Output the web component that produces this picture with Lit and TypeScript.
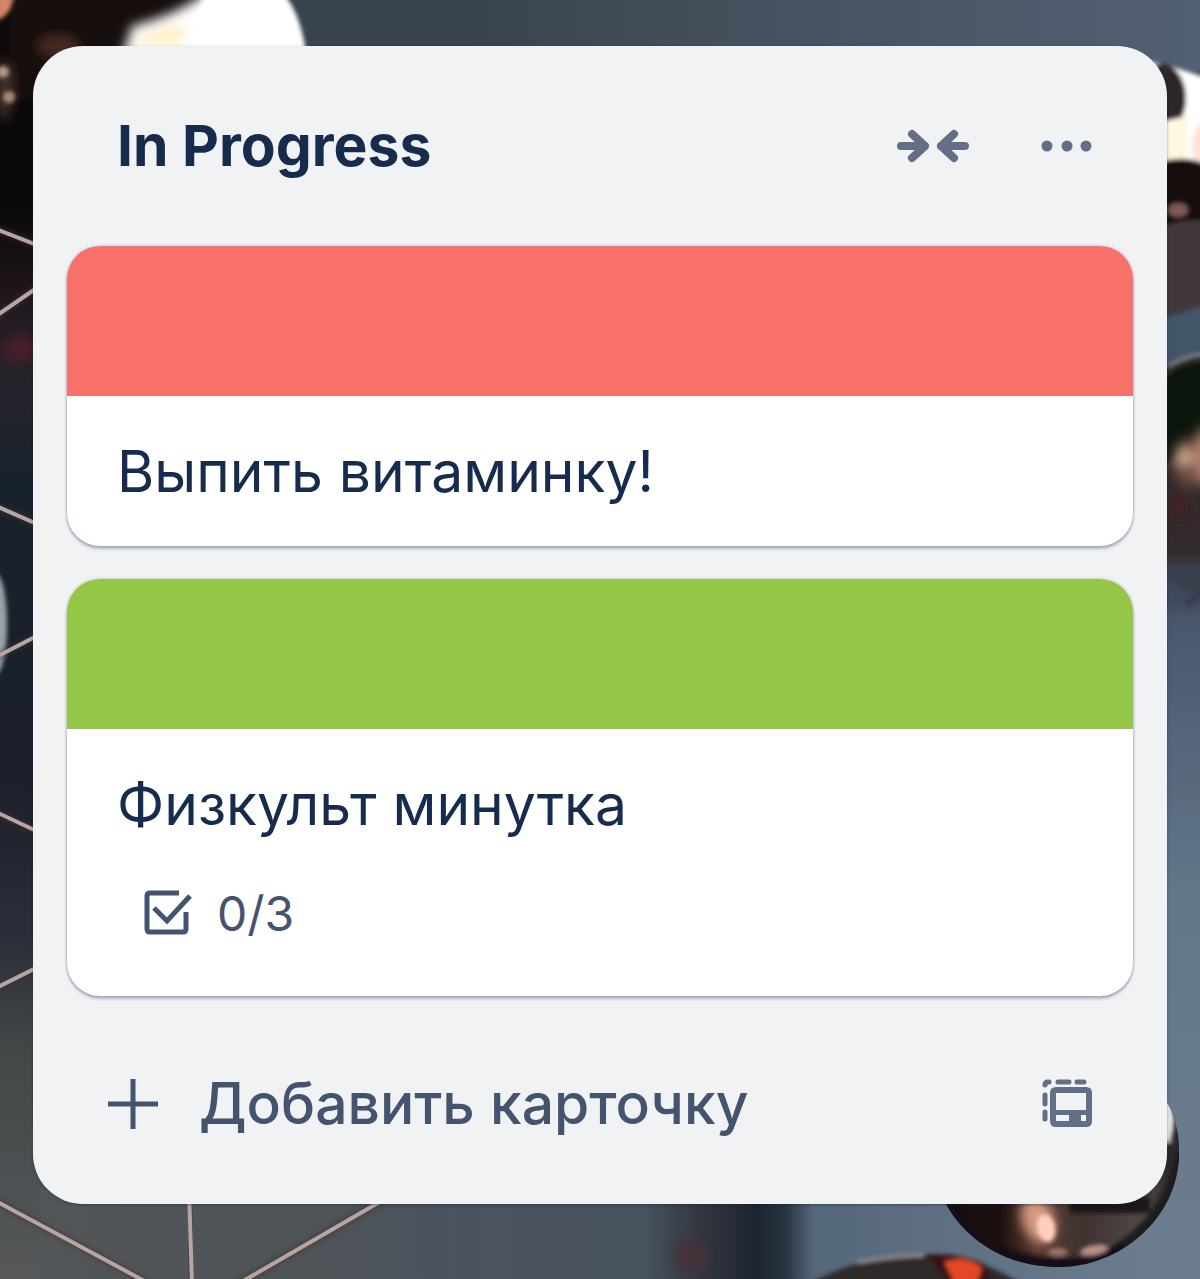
import { LitElement, html, css, svg, nothing } from "lit";
import { customElement, property } from "lit/decorators.js";

interface Card {
  title: string;
  cover: "red" | "green";
  checklist?: string;
}

const cards: Card[] = [
  { title: "Выпить витаминку!", cover: "red" },
  { title: "Физкульт минутка", cover: "green", checklist: "0/3" },
];

@customElement("board-backdrop")
class BoardBackdrop extends LitElement {
  static styles = css`
    :host {
      display: block;
      overflow: hidden;
    }
    .scene {
      display: block;
      width: 100%;
      height: 100%;
    }
  `;

  render() {
    const wires = [
      "M-4 229L60 254",
      "M-4 316L60 272",
      "M-4 506L60 534",
      "M-4 657L60 624",
      "M-4 812L60 842",
      "M-4 988L60 956",
      "M-4 1201L150 1284",
      "M189 1190L192 1284",
      "M390 1196L238 1284",
    ];
    return html`
      <svg class="scene" viewBox="0 0 1200 1279" preserveAspectRatio="xMidYMid slice" aria-hidden="true">
        <defs>
          <linearGradient id="left" x1="0" y1="0" x2="0" y2="1">
            <stop offset="0" stop-color="#120c0b" />
            <stop offset="0.15" stop-color="#08070a" />
            <stop offset="0.22" stop-color="#1c1419" />
            <stop offset="0.28" stop-color="#29232a" />
            <stop offset="0.38" stop-color="#18222c" />
            <stop offset="0.6" stop-color="#1b1f2a" />
            <stop offset="0.73" stop-color="#2b2d38" />
            <stop offset="0.82" stop-color="#424748" />
            <stop offset="1" stop-color="#56585a" />
          </linearGradient>
          <linearGradient id="right" x1="0" y1="0" x2="0" y2="1">
            <stop offset="0" stop-color="#505b69" />
            <stop offset="0.25" stop-color="#435568" />
            <stop offset="0.45" stop-color="#45526a" />
            <stop offset="0.7" stop-color="#63768a" />
            <stop offset="1" stop-color="#6d7d8f" />
          </linearGradient>
          <linearGradient id="top" x1="0" y1="0" x2="1" y2="0">
            <stop offset="0.25" stop-color="#37434e" />
            <stop offset="0.5" stop-color="#424f5b" />
            <stop offset="1" stop-color="#526073" />
          </linearGradient>
          <linearGradient id="bottom" x1="0" y1="0" x2="1" y2="0">
            <stop offset="0" stop-color="#535658" />
            <stop offset="0.28" stop-color="#4d5358" />
            <stop offset="0.4" stop-color="#4b5260" />
            <stop offset="0.54" stop-color="#48535d" />
            <stop offset="0.59" stop-color="#33363f" />
            <stop offset="0.64" stop-color="#1e2530" />
            <stop offset="0.665" stop-color="#263340" />
            <stop offset="0.69" stop-color="#55677a" />
            <stop offset="1" stop-color="#6d7d8f" />
          </linearGradient>
          <linearGradient id="drop" gradientUnits="userSpaceOnUse" x1="940" y1="0" x2="1180" y2="0">
            <stop offset="0" stop-color="#120d0d" />
            <stop offset="0.25" stop-color="#1c100e" />
            <stop offset="0.4" stop-color="#5a3a31" />
            <stop offset="0.6" stop-color="#3f3331" />
            <stop offset="0.85" stop-color="#51494a" />
            <stop offset="1" stop-color="#241f23" />
          </linearGradient>
          <clipPath id="drop-shape">
            <path d="M1060 1060C1142 1060 1179 1092 1179 1152C1179 1220 1118 1267 1059 1267C1006 1267 966 1240 946 1204C936 1186 936 1152 936 1140C936 1100 982 1060 1060 1060Z" />
          </clipPath>
          <filter id="soft" x="-50%" y="-50%" width="200%" height="200%"><feGaussianBlur stdDeviation="6" /></filter>
          <filter id="edge" x="-20%" y="-20%" width="140%" height="140%"><feGaussianBlur stdDeviation="2" /></filter>
        </defs>

        <rect width="1200" height="1279" fill="#4c5968" />
        <rect width="600" height="1279" fill="url(#left)" />
        <rect x="600" width="600" height="1279" fill="url(#right)" />
        <rect x="200" width="1000" height="70" fill="url(#top)" />
        <rect x="40" y="1190" width="1120" height="89" fill="url(#bottom)" />

        <g filter="url(#soft)">
          <path d="M10 -20H190V100H10Z" fill="#17100d" />
          <ellipse cx="58" cy="46" rx="20" ry="10" fill="#4a2c24" />
          <ellipse cx="20" cy="348" rx="15" ry="13" fill="#4a1f2a" />
          <ellipse cx="4" cy="90" rx="8" ry="30" fill="#44302a" />
          <ellipse cx="690" cy="1256" rx="16" ry="16" fill="#46303a" />
        </g>
        <g filter="url(#edge)">
          <path d="M-4 -4H14Q10 18 -4 20Z" fill="#d28767" />
          <path d="M284 -6Q302 16 307 60H180L206 -6Z" fill="#fff" />
          <circle cx="3" cy="72" r="6" fill="#b19a88" />
          <circle cx="9" cy="97" r="6" fill="#aa8b77" />
          <ellipse cx="-4" cy="624" rx="11" ry="50" fill="#9ca3a5" />
        </g>
        <g filter="url(#soft)">
          <path d="M120 64L132 26Q180 14 206 -8H260V64Z" fill="#fff" />
          <path d="M130 44Q140 30 188 24L180 46Z" fill="#fff0c4" />
        </g>

        <g filter="url(#edge)">
          <path d="M1150 62Q1182 68 1210 80V180H1150Z" fill="#fff" />
          <ellipse cx="1162" cy="98" rx="24" ry="34" fill="#2f2528" />
          <path d="M1160 122L1188 116V162H1160Z" fill="#fff7df" />
          <ellipse cx="1206" cy="146" rx="14" ry="24" fill="#ffe2d4" />
          <path d="M1160 162Q1186 154 1210 166V246L1160 258Z" fill="#17100f" />
          <ellipse cx="1178" cy="210" rx="10" ry="7" fill="#7e5a56" />
          <path d="M1160 228Q1186 216 1210 222V302Q1188 312 1160 318Z" fill="#40373a" />
          <path d="M1160 370Q1180 352 1210 354V600Q1180 590 1160 570Z" fill="#31292c" />
          <path d="M1160 384Q1180 360 1210 362V440L1160 466Z" fill="#10130d" />
          <path d="M1168 366Q1190 353 1208 354" stroke="#7d888f" stroke-width="3" fill="none" />
          <path d="M1186 604L1204 592" stroke="#1c2329" stroke-width="5" />
        </g>
        <g filter="url(#soft)">
          <ellipse cx="1188" cy="462" rx="14" ry="25" fill="#704b40" />
          <ellipse cx="1184" cy="457" rx="10" ry="9" fill="#c3a587" />
          <ellipse cx="1204" cy="456" rx="8" ry="30" fill="#b77e70" />
          <ellipse cx="1178" cy="506" rx="13" ry="15" fill="#3d2026" />
          <path d="M1150 560H1220V610H1150Z" fill="#3b4355" opacity="0.8" />
        </g>

        <g filter="url(#edge)">
          <path d="M800 1290Q840 1262 900 1256Q970 1246 1030 1290Z" fill="#2e292b" />
          <path d="M858 1262Q890 1256 924 1255" stroke="#89888b" stroke-width="4" fill="none" />
          <path d="M924 1255Q960 1252 984 1264L996 1286H950Q940 1268 924 1255Z" fill="#341716" />
          <path d="M944 1262Q966 1254 982 1268L976 1286H956Z" fill="#e24725" />
        </g>
        <g clip-path="url(#drop-shape)">
          <rect x="930" y="1050" width="260" height="230" fill="url(#drop)" />
          <g filter="url(#edge)">
            <path d="M1170 1096Q1178 1120 1170 1142H1160V1096Z" fill="#e5e8e7" />
            <path d="M1164 1142H1190V1170H1164Z" fill="#2a2629" />
            <path d="M1184 1150Q1172 1220 1110 1256" stroke="#1d1a1d" stroke-width="14" fill="none" />
            <path d="M940 1206Q990 1266 1060 1266Q1100 1266 1126 1250" stroke="#171113" stroke-width="16" fill="none" />
            <path d="M1070 1205H1150" stroke="#1f1615" stroke-width="16" />
            <ellipse cx="1058" cy="1252" rx="10" ry="4" fill="#9b766c" />
            <ellipse cx="1094" cy="1250" rx="14" ry="5" fill="#b98f89" transform="rotate(-10 1094 1250)" />
          </g>
          <ellipse cx="1038" cy="1220" rx="16" ry="24" fill="#d69a80" filter="url(#soft)" transform="rotate(-20 1038 1220)" />
          <ellipse cx="1046" cy="1228" rx="9" ry="14" fill="#ffd0c0" filter="url(#edge)" transform="rotate(-12 1046 1228)" />
        </g>

        ${wires.map(
          (d) => svg`
            <path d=${d} stroke="#403031" stroke-width="8" fill="none" opacity="0.5" filter="url(#edge)" />
            <path d=${d} stroke="#b6a5a3" stroke-width="4" fill="none" />
          `,
        )}
      </svg>
    `;
  }
}

@customElement("board-card")
class BoardCard extends LitElement {
  @property({ attribute: false }) card!: Card;

  static styles = css`
    :host {
      display: block;
    }
    .card {
      overflow: hidden;
      border-radius: 33px;
      background: #fff;
      box-shadow: 0 3px 3px #091e4240, 0 0 3px #091e424f;
      color: #172b4d;
    }
    .cover {
      height: 150px;
    }
    .red {
      background: #f87168;
    }
    .green {
      background: #94c748;
    }
    .body {
      padding: 34px 50px 32px;
    }
    .title {
      margin: 0;
      font-size: 57px;
      font-weight: 400;
      line-height: 84px;
    }
    .badge {
      display: flex;
      align-items: center;
      gap: 24px;
      height: 84px;
      margin: 24px 0 9px;
      padding: 0 24px;
      color: #44546f;
      font-size: 48px;
    }
    .badge-icon {
      width: 52px;
      height: 52px;
      flex: none;
    }
  `;

  render() {
    const { title, cover, checklist } = this.card;
    return html`
      <article class="card">
        <div class="cover ${cover}"></div>
        <div class="body">
          <h3 class="title">${title}</h3>
          ${checklist
            ? html`<div class="badge">
                <svg class="badge-icon" viewBox="0 0 52 52" fill="none" stroke="currentColor" aria-hidden="true">
                  <path d="M38 6H9Q6 6 6 9V42Q6 45 9 45H42Q45 45 45 42V25" stroke-width="5" />
                  <path d="M13 21L26 34L49 9" stroke-width="5" />
                </svg>
                <span>${checklist}</span>
              </div>`
            : nothing}
        </div>
      </article>
    `;
  }
}

@customElement("app-root")
class AppRoot extends LitElement {
  static styles = css`
    :host {
      display: block;
      position: relative;
      box-sizing: border-box;
      min-height: 100vh;
      padding: 46px 33px;
      font-family: Inter, "Noto Sans", sans-serif;
    }
    .backdrop {
      position: absolute;
      inset: 0;
    }
    .list {
      position: relative;
      padding: 0 34px;
      border-radius: 50px;
      background: #f1f2f4;
      box-shadow: 0 1px 3px #091e4266;
    }
    .header,
    .footer {
      display: flex;
      align-items: center;
      justify-content: space-between;
    }
    .header {
      height: 200px;
      padding: 0 16px 0 50px;
    }
    .footer {
      height: 208px;
      padding: 8px 16px 0 40px;
      box-sizing: border-box;
    }
    .name {
      margin: 0;
      color: #172b4d;
      font-size: 57px;
      font-weight: 700;
      line-height: 84px;
    }
    .actions {
      display: flex;
      gap: 24px;
    }
    .button {
      display: flex;
      align-items: center;
      justify-content: center;
      padding: 0;
      border: 0;
      background: none;
      color: #44546f;
      font: inherit;
      cursor: pointer;
    }
    .icon-button {
      width: 100px;
      height: 100px;
      color: #626f86;
    }
    .add {
      gap: 40px;
      font-size: 57px;
      font-weight: 500;
      line-height: 84px;
    }
    .icon {
      width: 52px;
      height: 52px;
      flex: none;
    }
    .wide {
      width: 76px;
    }
    .actions .icon-button:first-child {
      width: 120px;
    }
    .cards {
      display: flex;
      flex-direction: column;
      gap: 33px;
      margin: 0;
      padding: 0;
      list-style: none;
    }
  `;

  render() {
    return html`
      <board-backdrop class="backdrop"></board-backdrop>
      <section class="list">
        <header class="header">
          <h2 class="name">In Progress</h2>
          <div class="actions">
            <button class="button icon-button" type="button" aria-label="Свернуть список">
              <svg class="icon wide" viewBox="0 0 76 52" fill="none" stroke="currentColor" stroke-width="8" stroke-linecap="round" stroke-linejoin="round" aria-hidden="true">
                <path d="M6 26H30M17 14L30 26L17 38" />
                <path d="M70 26H46M59 14L46 26L59 38" />
              </svg>
            </button>
            <button class="button icon-button" type="button" aria-label="Действия со списком">
              <svg class="icon" viewBox="0 0 52 52" fill="currentColor" aria-hidden="true">
                <circle cx="6" cy="26" r="5.5" />
                <circle cx="26" cy="26" r="5.5" />
                <circle cx="45" cy="26" r="5.5" />
              </svg>
            </button>
          </div>
        </header>
        <ul class="cards">
          ${cards.map((card) => html`<li><board-card .card=${card}></board-card></li>`)}
        </ul>
        <footer class="footer">
          <button class="button add" type="button">
            <svg class="icon" viewBox="0 0 52 52" stroke="currentColor" stroke-width="5" aria-hidden="true">
              <path d="M1 26H51M26 1V51" />
            </svg>
            Добавить карточку
          </button>
          <button class="button icon-button" type="button" aria-label="Создать из шаблона">
            <svg class="icon" viewBox="0 0 52 52" aria-hidden="true">
              <path
                fill="currentColor"
                fill-rule="evenodd"
                d="M15 9H45Q51 9 51 15V43Q51 49 45 49H15Q9 49 9 43V15Q9 9 15 9ZM15 15V32H45V15ZM15 37V43H28V37ZM40 37V43H45V37Z"
              />
              <path
                d="M4 7Q4 4 7 4H8M17 4H28M36 4H43M4 17V26M4 34V41"
                fill="none"
                stroke="currentColor"
                stroke-width="5"
                stroke-linecap="round"
              />
            </svg>
          </button>
        </footer>
      </section>
    `;
  }
}
